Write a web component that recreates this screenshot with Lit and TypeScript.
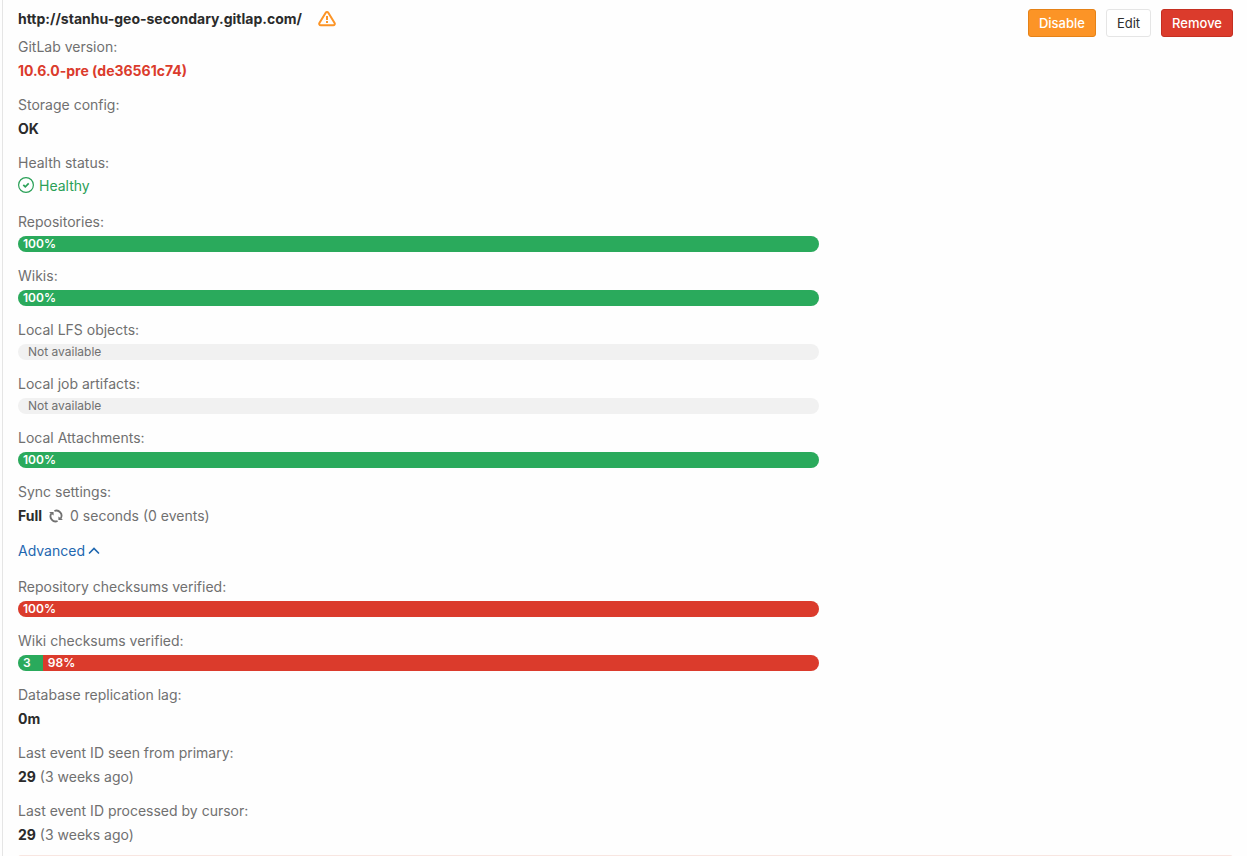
import { LitElement, html, css, svg, TemplateResult } from "lit";
import { customElement, property, state } from "lit/decorators.js";
import { styleMap } from "lit/directives/style-map.js";

interface Segment {
  kind: "success" | "failure";
  width: number;
  label: string;
}

const full = (kind: Segment["kind"]): Segment[] => [{ kind, width: 100, label: "100%" }];

const warningIcon = svg`<path fill="none" stroke="currentColor" stroke-width="2" stroke-linejoin="round"
  d="M7.7 1.8c.6-1 2-1 2.6 0l6.3 10.2c.6 1.1-.1 2.3-1.3 2.3H2.7c-1.2 0-1.9-1.2-1.3-2.3z"/>
  <path fill="currentColor" d="M8 5h2v4H8zM8 10h2v2H8z"/>`;

@customElement("stacked-progress")
class StackedProgress extends LitElement {
  @property({ attribute: false }) segments: Segment[] = [];

  static styles = css`
    :host { display: block; }
    .bar {
      display: flex;
      height: 16px;
      border-radius: 10px;
      overflow: hidden;
      background: #f1f1f1;
      font-size: 12px;
      line-height: 16px;
    }
    .segment {
      box-sizing: border-box;
      padding: 0 5px;
      color: #fff;
      font-weight: 600;
      overflow: hidden;
      white-space: nowrap;
    }
    .success { background: #2aaa5c; }
    .failure { background: #db3b2c; }
    .empty { padding-left: 10px; color: #707070; }
  `;

  render() {
    return html`<div class="bar">
      ${this.segments.length
        ? this.segments.map(
            (s) => html`<div class="segment ${s.kind}" style=${styleMap({ width: `${s.width}%` })}>${s.label}</div>`
          )
        : html`<span class="empty">Not available</span>`}
    </div>`;
  }
}

@customElement("app-root")
class AppRoot extends LitElement {
  @state() private open = true;

  static styles = css`
    :host {
      display: block;
      min-height: 100vh;
      box-sizing: border-box;
      padding-left: 2px;
      background: #fefefe;
      font: 14px/20px Inter, "Liberation Sans", sans-serif;
      color: #707070;
    }
    .panel {
      box-sizing: border-box;
      min-height: 100vh;
      border-left: 1px solid #e5e5e5;
      padding: 9px 14px 0 15px;
    }
    .top {
      display: flex;
      justify-content: space-between;
      align-items: flex-start;
    }
    .heading {
      display: flex;
      align-items: center;
      gap: 16px;
      height: 20px;
      margin-bottom: 8px;
    }
    h1 { margin: 0; font-size: 14px; line-height: 20px; font-weight: 700; color: #2b2b2b; }
    .warning { width: 18px; height: 16px; color: #fc9426; display: block; }
    .actions { display: flex; gap: 10px; height: 28px; }
    .btn {
      box-sizing: border-box;
      height: 28px;
      padding: 0 10px;
      border: 1px solid #e5e5e5;
      border-radius: 3px;
      background: #fff;
      color: #2e2e2e;
      font: 500 13px/20px Inter, "Liberation Sans", sans-serif;
      cursor: pointer;
    }
    .edit { font-weight: 400; }
    .disable { background: #fc9426; border-color: #e58217; color: #fff; }
    .remove { background: #db3b2c; border-color: #c52f21; color: #fff; }
    .details {
      width: 65.9%;
      display: flex;
      flex-direction: column;
      gap: 14px;
    }
    dl { margin: 0; display: grid; gap: 14px; }
    .item { display: grid; gap: 4px; }
    dt, dd { margin: 0; }
    b { font-weight: 700; color: #2b2b2b; }
    .danger { color: #db3b2c; font-weight: 700; }
    .health { display: flex; gap: 5px; height: 21px; line-height: 18px; color: #2aa057; }
    .check { width: 16px; height: 16px; }
    .sync { display: flex; align-items: center; gap: 7px; }
    .refresh { width: 14px; height: 14px; }
    .toggle {
      display: flex;
      align-self: flex-start;
      align-items: center;
      gap: 3px;
      margin: 1px 0 2px;
      padding: 0;
      border: 0;
      background: none;
      font: inherit;
      color: #1f67b0;
      cursor: pointer;
    }
    .caret { width: 12px; height: 12px; }
    .closed { transform: rotate(180deg); }
    .notice { margin-top: 10px; height: 12px; border-radius: 3px; background: #f8e6e1; }
    .page { max-height: 100vh; overflow: hidden; }
  `;

  private item(label: string, value: TemplateResult) {
    return html`<div class="item"><dt>${label}</dt><dd>${value}</dd></div>`;
  }

  private progress(label: string, segments: Segment[]) {
    return this.item(label, html`<stacked-progress .segments=${segments}></stacked-progress>`);
  }

  render() {
    return html`<main class="page"><section class="panel">
      <header class="top">
        <div class="heading">
          <h1>http://stanhu-geo-secondary.gitlap.com/</h1>
          <svg class="warning" viewBox="0 0 18 16" aria-hidden="true">${warningIcon}</svg>
        </div>
        <div class="actions">
          <button class="btn disable">Disable</button>
          <button class="btn edit">Edit</button>
          <button class="btn remove">Remove</button>
        </div>
      </header>
      <div class="details">
        <dl>
          ${this.item("GitLab version:", html`<span class="danger">10.6.0-pre (de36561c74)</span>`)}
          ${this.item("Storage config:", html`<b>OK</b>`)}
          ${this.item("Health status:", html`<span class="health">
            <svg class="check" viewBox="0 0 16 16" fill="none" stroke="currentColor" aria-hidden="true">
              <circle cx="8" cy="8" r="7.4" stroke-width="1.2"/>
              <path d="M5.3 7.8l2 2 3.4-3.4" stroke-width="1.7"/>
            </svg>Healthy</span>`)}
          ${this.progress("Repositories:", full("success"))}
          ${this.progress("Wikis:", full("success"))}
          ${this.progress("Local LFS objects:", [])}
          ${this.progress("Local job artifacts:", [])}
          ${this.progress("Local Attachments:", full("success"))}
          ${this.item("Sync settings:", html`<span class="sync"><b>Full</b>
            <svg class="refresh" viewBox="0 0 14 14" fill="none" stroke="currentColor" stroke-width="1.8" aria-hidden="true">
              <path d="M2.3 4.6A5.1 5.1 0 0 0 8.6 12M5.4 2A5.1 5.1 0 0 1 11.7 9.4"/>
              <path d="M0 3h4.6v3.4zM14 11H9.4V7.6z" fill="currentColor" stroke="none"/>
            </svg><span>0 seconds (0 events)</span></span>`)}
        </dl>
        <button class="toggle" aria-expanded=${this.open} @click=${() => (this.open = !this.open)}>
          Advanced
          <svg class="caret ${this.open ? "" : "closed"}" viewBox="0 0 12 12" fill="none" stroke="currentColor"
            stroke-width="1.7" stroke-linecap="round" aria-hidden="true"><path d="M1.5 8L6 3.5 10.5 8"/></svg>
        </button>
        ${this.open
          ? html`<dl>
              ${this.progress("Repository checksums verified:", full("failure"))}
              ${this.progress("Wiki checksums verified:", [
                { kind: "success", width: 3.1, label: "3" },
                { kind: "failure", width: 96.9, label: "98%" },
              ])}
              ${this.item("Database replication lag:", html`<b>0m</b>`)}
              ${this.item("Last event ID seen from primary:", html`<b>29</b> (3 weeks ago)`)}
              ${this.item("Last event ID processed by cursor:", html`<b>29</b> (3 weeks ago)`)}
            </dl>`
          : ""}
      </div>
      <div class="notice"></div>
    </section></main>`;
  }
}
